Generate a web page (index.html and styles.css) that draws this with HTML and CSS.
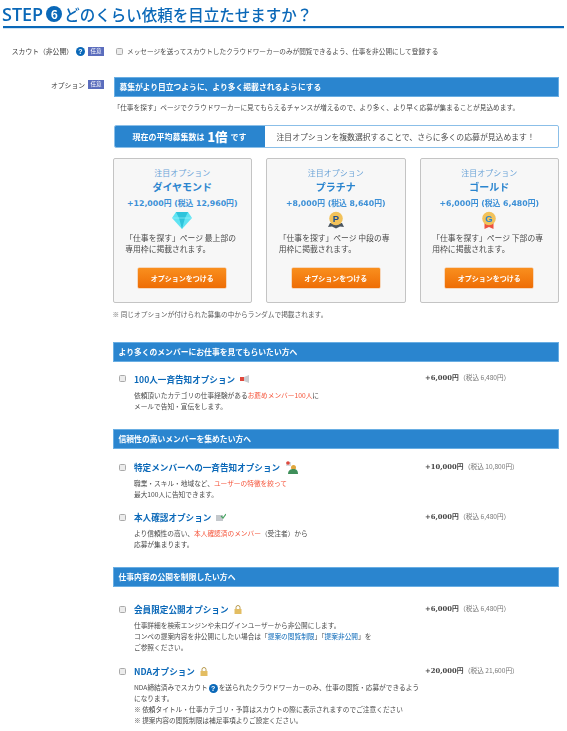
FILE: index.html
```html
<!DOCTYPE html>
<html lang="ja">
<head>
<meta charset="utf-8">
<title>STEP 6</title>
<link rel="stylesheet" href="styles.css">
</head>
<body>
<h1 class="title"><span class="step-word">STEP</span><span class="step-num">6</span>どのくらい依頼を目立たせますか？</h1>

<div class="form-row scout-row">
  <div class="label-col">
    <span class="label">スカウト（非公開）</span>
    <span class="help">?</span>
    <span class="badge">任意</span>
  </div>
  <label class="scout-check"><span class="check"></span>メッセージを送ってスカウトしたクラウドワーカーのみが閲覧できるよう、仕事を非公開にして登録する</label>
</div>

<div class="form-row">
  <div class="label-col">
    <span class="label">オプション</span>
    <span class="badge">任意</span>
  </div>
  <div class="main-col">
    <div class="band band-first">募集がより目立つように、より多く掲載されるようにする</div>
    <p class="intro">「仕事を探す」ページでクラウドワーカーに見てもらえるチャンスが増えるので、より多く、より早く応募が集まることが見込めます。</p>
    <div class="ribbon">
      <div class="ribbon-left">現在の平均募集数は<b class="big">1倍</b>です</div>
      <div class="ribbon-right">注目オプションを複数選択することで、さらに多くの応募が見込めます！</div>
    </div>

    <div class="cards">
      <div class="card">
        <div class="card-kicker">注目オプション</div>
        <div class="card-name">ダイヤモンド</div>
        <div class="card-price">+12,000円 (税込 12,960円)</div>
        <svg class="card-icon" viewBox="0 0 20 18"><path d="M4 1h12l4 6-10 11L0 7z" fill="#5fe3f2"/><path d="M4 1l3 6h6l3-6zM7 7l3 11 3-11z" fill="#2fc4dc"/><path d="M0 7h20" stroke="#a5f3fa" stroke-width=".6"/></svg>
        <p class="card-desc">「仕事を探す」ページ 最上部の専用枠に掲載されます。</p>
        <button class="cta" type="button">オプションをつける</button>
      </div>
      <div class="card">
        <div class="card-kicker">注目オプション</div>
        <div class="card-name">プラチナ</div>
        <div class="card-price">+8,000円 (税込 8,640円)</div>
        <svg class="card-icon" viewBox="0 0 20 18"><path d="M4 12l-2 4 4-.5 4 2 4-2 4 .5-2-4z" fill="#4a5560"/><circle cx="10" cy="7.5" r="6.8" fill="#f2c25a"/><text x="10" y="10.8" class="medal-p">P</text></svg>
        <p class="card-desc">「仕事を探す」ページ 中段の専用枠に掲載されます。</p>
        <button class="cta" type="button">オプションをつける</button>
      </div>
      <div class="card">
        <div class="card-kicker">注目オプション</div>
        <div class="card-name">ゴールド</div>
        <div class="card-price">+6,000円 (税込 6,480円)</div>
        <svg class="card-icon" viewBox="0 0 20 18"><path d="M5.500 12v6l4.500-2 4.500 2v-6z" fill="#ee5340"/><circle cx="10" cy="7.500" r="6.800" fill="#f2c25a"/><text x="10" y="10.800" class="medal-g">G</text></svg>
        <p class="card-desc">「仕事を探す」ページ 下部の専用枠に掲載されます。</p>
        <button class="cta" type="button">オプションをつける</button>
      </div>
    </div>
    <p class="note">※ 同じオプションが付けられた募集の中からランダムで掲載されます。</p>

    <div class="band band-section">より多くのメンバーにお仕事を見てもらいたい方へ</div>
    <div class="item item-first">
      <span class="check"></span>
      <div class="item-body">
        <div class="item-title">100人一斉告知オプション
          <svg class="mini" viewBox="0 0 10 8"><path d="M0 2h4v4H0z" fill="#e0483c"/><path d="M4 2l5-2v8L4 6z" fill="#c9ccd0"/></svg>
        </div>
        <p class="item-desc">依頼頂いたカテゴリの仕事経験がある<em>お薦めメンバー100人</em>に<br>メールで告知・宣伝をします。</p>
      </div>
      <div class="item-price"><b>+6,000円</b> <span>（税込 6,480円）</span></div>
    </div>

    <div class="band band-section band-tight">信頼性の高いメンバーを集めたい方へ</div>
    <div class="item item-a">
      <span class="check"></span>
      <div class="item-body">
        <div class="item-title">特定メンバーへの一斉告知オプション
          <svg class="mini-big" viewBox="0 0 13 14"><path d="M1 2h5v4H1z" fill="#d9dbe0"/><circle cx="3" cy="3" r="1.800" fill="#e0483c"/><circle cx="8.500" cy="7.500" r="2.500" fill="#e0a63c"/><path d="M3 14c0-4 3-5 5.500-5s4.500 1 4.500 5z" fill="#3f8f5a"/></svg>
        </div>
        <p class="item-desc">職業・スキル・地域など、<em>ユーザーの特徴を絞って</em><br>最大100人に告知できます。</p>
      </div>
      <div class="item-price"><b>+10,000円</b> <span>（税込 10,800円）</span></div>
    </div>
    <div class="item item-b">
      <span class="check"></span>
      <div class="item-body">
        <div class="item-title">本人確認オプション
          <svg class="mini" viewBox="0 0 10 8"><path d="M0 2h7v6H0z" fill="#c4c8cc"/><path d="M5 3l2 2 3-4" fill="none" stroke="#4aa564" stroke-width="1.200"/></svg>
        </div>
        <p class="item-desc">より信頼性の高い、<em>本人確認済のメンバー</em>（受注者）から<br>応募が集まります。</p>
      </div>
      <div class="item-price"><b>+6,000円</b> <span>（税込 6,480円）</span></div>
    </div>

    <div class="band band-section band-tight2">仕事内容の公開を制限したい方へ</div>
    <div class="item item-c">
      <span class="check"></span>
      <div class="item-body">
        <div class="item-title">会員限定公開オプション
          <svg class="lock" viewBox="0 0 8 9"><path d="M2 4V2.500a2 2 0 0 1 4 0V4" fill="none" stroke="#b89a4e"/><path d="M.5 4h7v5h-7z" fill="#e3bd62"/></svg>
        </div>
        <p class="item-desc">仕事詳細を検索エンジンや未ログインユーザーから非公開にします。<br>コンペの提案内容を非公開にしたい場合は「<a>提案の閲覧制限</a>」「<a>提案非公開</a>」を<br>ご参照ください。</p>
      </div>
      <div class="item-price"><b>+6,000円</b> <span>（税込 6,480円）</span></div>
    </div>
    <div class="item item-d">
      <span class="check"></span>
      <div class="item-body">
        <div class="item-title">NDAオプション
          <svg class="lock" viewBox="0 0 8 9"><path d="M2 4V2.500a2 2 0 0 1 4 0V4" fill="none" stroke="#b89a4e"/><path d="M.5 4h7v5h-7z" fill="#e3bd62"/></svg>
        </div>
        <p class="item-desc">NDA締結済みでスカウト<span class="help help-inline">?</span>を送られたクラウドワーカーのみ、仕事の閲覧・応募ができるようになります。<br>※ 依頼タイトル・仕事カテゴリ・予算はスカウトの際に表示されますのでご注意ください<br>※ 提案内容の閲覧制限は補足事項よりご設定ください。</p>
      </div>
      <div class="item-price"><b>+20,000円</b> <span>（税込 21,600円）</span></div>
    </div>
  </div>
</div>
</body>
</html>
```
FILE: styles.css
```css
* { box-sizing: border-box; }
html, body { margin: 0; padding: 0; }
body {
  width: 567px;
  height: 731px;
  overflow: hidden;
  background: #fff;
  color: #4a4a4a;
  font-family: "Noto Sans CJK JP", "Liberation Sans", sans-serif;
  font-size: 6.700px;
  filter: blur(0.3px);
}
p { margin: 0; }
.title {
  margin: 0 3px;
  height: 28px;
  padding-top: 1px;
  border-bottom: 2px solid #0a68b8;
  box-shadow: 0 1px 0 #cfe2f3;
  color: #0a68b8;
  font-family: "Noto Sans CJK JP", sans-serif;
  font-size: 15.500px;
  font-weight: 500;
  line-height: 22px;
  display: flex;
  align-items: center;
}
.step-word {
  font-family: "Open Sans", sans-serif;
  font-size: 18px;
  font-weight: 600;
  margin-left: -1px;
}
.step-num {
  width: 16px;
  height: 16px;
  margin: 0 2px 0 3px;
  border-radius: 50%;
  background: #0a68b8;
  color: #fff;
  font-size: 12px;
  font-weight: 700;
  line-height: 16px;
  text-align: center;
}
.form-row { display: flex; }
.scout-row { margin-top: 16px; height: 14px; align-items: center; }
.label-col {
  width: 104px;
  flex: none;
  display: flex;
  justify-content: flex-end;
  align-items: center;
  gap: 3px;
  color: #3a3a3a;
}
.label { font-size: 6.800px; }
.help {
  display: inline-block;
  width: 9px;
  height: 9px;
  border-radius: 50%;
  background: #0a68b8;
  color: #fff;
  font-size: 7px;
  font-weight: 700;
  line-height: 9px;
  text-align: center;
  font-family: "Liberation Sans", sans-serif;
}
.help-inline { margin: 0 1px; vertical-align: -1.500px; }
.badge {
  width: 16px;
  height: 9px;
  background: #5b6dbd;
  color: #fff;
  font-size: 5.500px;
  line-height: 9px;
  text-align: center;
}
.check {
  display: inline-block;
  flex: none;
  width: 7px;
  height: 7px;
  border: 1px solid #aaa;
  border-radius: 1.500px;
  background: #ececec;
}
.scout-check {
  margin-left: 12px;
  display: flex;
  align-items: center;
  gap: 4px;
  font-size: 6.650px;
  white-space: nowrap;
}
.form-row:last-child { margin-top: 19px; align-items: flex-start; }
.form-row:last-child > .label-col { height: 9px; margin-top: 3px; }
.main-col { margin-left: 9.500px; width: 445.500px; }
.band {
  background: #2a85cf;
  border: 1px solid #69aee3;
  color: #fff;
  font-weight: 700;
  font-size: 7.800px;
  height: 20px;
  line-height: 18px;
  padding-left: 5px;
}
.intro { margin-top: 5px; line-height: 10px; font-size: 6.700px; white-space: nowrap; }
.ribbon {
  margin-top: 13px;
  height: 23px;
  display: flex;
  border: 1px solid #8bbfe8;
  border-radius: 2px;
  overflow: hidden;
}
.ribbon-left {
  width: 150px;
  background: #2a85cf;
  color: #fff;
  font-weight: 700;
  font-size: 8px;
  display: flex;
  align-items: center;
  justify-content: center;
  gap: 3px;
  white-space: nowrap;
}
.big { font-size: 12.500px; line-height: 14px; }
.ribbon-right {
  flex: 1;
  padding-left: 12px;
  font-size: 7.850px;
  line-height: 21px;
  white-space: nowrap;
}
.cards { margin-top: 10px; display: flex; gap: 14px; margin-left: -1px; }
.card {
  width: 139.500px;
  height: 145px;
  background: #f7f7f7;
  border: 1px solid #c4c4c4;
  border-radius: 2px;
  padding-top: 8px;
  display: flex;
  flex-direction: column;
  align-items: center;
}
.card-kicker { color: #6ea5d8; font-size: 8px; line-height: 12px; }
.card-name { color: #2a85cf; font-size: 10px; font-weight: 700; line-height: 14px; margin-top: 1px; }
.card-price { color: #3b8fd6; font-size: 7.800px; font-weight: 700; line-height: 10px; margin-top: 5px; font-family: "DejaVu Sans", "Noto Sans CJK JP", sans-serif; white-space: nowrap; }
.card-icon { width: 20px; height: 18px; margin-top: 2px; display: block; }
.medal-p, .medal-g {
  font-family: "Liberation Sans", sans-serif;
  font-size: 9.500px;
  font-weight: 700;
  text-anchor: middle;
}
.medal-p { fill: #1d4d8f; }
.medal-g { fill: #2a85cf; }
.card-desc { width: 114px; margin-top: 3px; font-size: 7.800px; line-height: 11px; height: 22px; }
.cta {
  margin-top: 14px;
  width: 88px;
  height: 20px;
  border: 0;
  border-radius: 1px;
  background: linear-gradient(#f98f1e, #ee6d05);
  box-shadow: 0 0 0 .5px #f5b985;
  color: #fff;
  font-family: inherit;
  font-size: 7px;
  font-weight: 700;
  padding: 0;
}
.note { margin: 6px 0 0 -1px; line-height: 10px; font-size: 6.700px; color: #5c5c5c; }
.band-section { margin: 23px 0 0 -1px; width: 446px; padding-left: 5px; }
.band-tight { margin-top: 16px; }
.band-tight2 { margin-top: 19px; }
.item { display: flex; margin-top: 9px; margin-left: 5px; height: 42px; }
.item .check { margin-top: 4px; }
.item-body { margin-left: 8.500px; width: 291px; flex: none; }
.item-title {
  color: #0a68b8;
  font-size: 8.600px;
  font-weight: 700;
  line-height: 14px;
  display: flex;
  align-items: center;
  gap: 5px;
  white-space: nowrap;
}
.item-first .item-title { margin-top: 1px; }
.item-desc { margin-top: 3.500px; font-size: 6.700px; line-height: 11px; width: 287px; }
.item-desc em { color: #f5543a; font-style: normal; }
.item-desc a { color: #0a68b8; }
.item-price { font-size: 6.600px; line-height: 12px; white-space: nowrap; }
.item-price b { font-family: "DejaVu Serif", "Noto Sans CJK JP", serif; color: #444; font-size: 6.800px; }
.item-price span { color: #777; margin-left: -1px; }
.mini { width: 10px; height: 8px; }
.mini-big { width: 13px; height: 14px; }
.lock { width: 8px; height: 9px; }
.item-a { margin-top: 11px; height: 38px; }
.item-b { margin-top: 12px; height: 38px; }
.item-c { margin-top: 15px; height: 50px; }
.item-d { margin-top: 12px; height: 60px; }
```
